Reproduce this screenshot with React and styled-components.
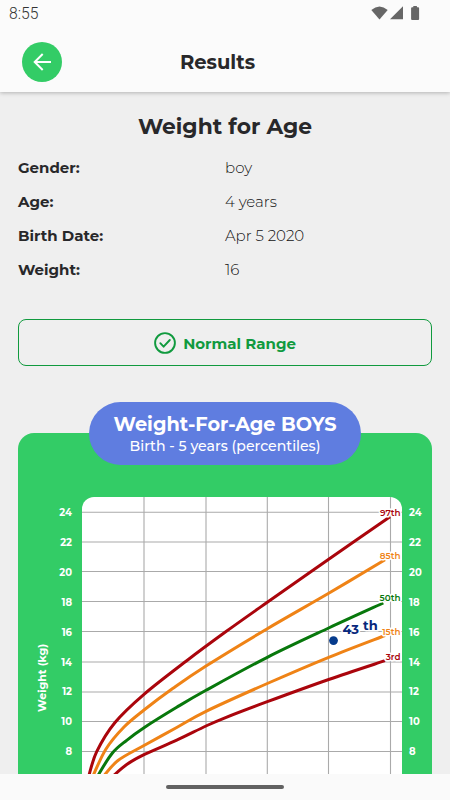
import React from "react";
import styled, { createGlobalStyle } from "styled-components";

const GlobalStyle = createGlobalStyle`
  * {
    box-sizing: border-box;
  }
  body {
    margin: 0;
    overflow: hidden;
    background: #efefef;
    font-family: Montserrat, Inter, "Open Sans", sans-serif;
  }
`;

const Screen = styled.div`
  width: 450px;
  height: 800px;
  display: flex;
  flex-direction: column;
  overflow: hidden;
  color: #28282a;
`;

const Top = styled.div`
  flex: none;
  height: 92px;
  background: #fbfbfb;
  box-shadow: 0 1px 4px rgba(0, 0, 0, 0.25);
  z-index: 1;
`;

const StatusBar = styled.div`
  height: 28px;
  display: flex;
  align-items: center;
  justify-content: space-between;
  padding: 0 30px 0 9px;
`;

const Clock = styled.span`
  font-family: Roboto, sans-serif;
  font-size: 15.7px;
  font-weight: 300;
  line-height: 28px;
  color: #333;
`;

const Header = styled.header`
  height: 64px;
  display: grid;
  grid-template-columns: 40px 1fr 40px;
  align-items: center;
  padding: 4px 37px 0 22px;
`;

const BackButton = styled.button`
  width: 40px;
  height: 40px;
  padding: 0;
  border: none;
  border-radius: 50%;
  background: #33cc66;
  display: flex;
  align-items: center;
  justify-content: center;
`;

const HeaderTitle = styled.h1`
  margin: 0;
  text-align: center;
  font-size: 19.5px;
  font-weight: 700;
  line-height: 24px;
`;

const Content = styled.main`
  flex: 1;
  min-height: 0;
  overflow: hidden;
  background: #efefef;
  padding: 20px 18px 0;
`;

const Title = styled.h2`
  margin: 0 0 10px;
  padding-top: 1px;
  text-align: center;
  font-size: 21.8px;
  font-weight: 700;
  line-height: 27px;
`;

const InfoRow = styled.div`
  display: grid;
  grid-template-columns: 1fr 1fr;
  height: 34.1px;
  align-items: center;
  font-size: 15px;
`;

const Label = styled.span`
  font-weight: 700;
`;

const Value = styled.span`
  font-weight: 300;
  color: #111;
`;

const Status = styled.div`
  height: 47px;
  margin-top: 33px;
  border: 1.5px solid #109a3e;
  border-radius: 8px;
  display: flex;
  align-items: center;
  justify-content: center;
  gap: 7px;
  padding-top: 1px;
  color: #109a3e;
  font-size: 15px;
  font-weight: 700;
`;

const ChartCard = styled.section`
  height: 400px;
  margin-top: 67px;
  border-radius: 16px;
  background: #33cc66;
  display: flex;
  flex-direction: column;
  align-items: center;
`;

const ChartBadge = styled.div`
  flex: none;
  width: 272px;
  height: 63px;
  margin-top: -31px;
  border-radius: 32px;
  background: #5f7de0;
  color: #fff;
  text-align: center;
  padding-top: 9px;
`;

const BadgeTitle = styled.div`
  font-size: 19.3px;
  font-weight: 700;
  line-height: 26px;
`;

const BadgeSub = styled.div`
  font-size: 14.1px;
  font-weight: 500;
  line-height: 19px;
`;

const ChartArea = styled.div`
  width: 100%;
  margin-top: 32px;
  display: flex;
`;

const AxisTitle = styled.div`
  width: 32px;
  height: 276px;
  display: flex;
  align-items: center;
  justify-content: flex-end;
  padding: 0 0 147px;
  writing-mode: vertical-rl;
  transform: rotate(180deg);
  color: #fff;
  font-size: 11px;
  font-weight: 700;
  white-space: nowrap;
`;

const AxisText = styled.span`
  margin-right: 16px;
`;

const Ticks = styled.div`
  width: ${(p) => (p.$right ? "30px" : "32px")};
  padding-left: ${(p) => (p.$right ? "7px" : "0")};
  padding-right: ${(p) => (p.$right ? "0" : "10px")};
  text-align: ${(p) => (p.$right ? "left" : "right")};
  color: #fff;
  font-size: 10px;
  font-weight: 700;
`;

const Tick = styled.div`
  height: 29.85px;
  line-height: 31px;
`;

const Plot = styled.svg`
  display: block;
  width: 320px;
  height: 280px;
  border-radius: 12px 12px 0 0;
  background: #fff;
`;

const CurveLabel = styled.text`
  font-size: 8.8px;
  font-weight: 600;
  text-anchor: end;
  paint-order: stroke;
  stroke: #fff;
  stroke-width: 3px;
  stroke-linejoin: round;
`;

const PointLabel = styled.text`
  font-size: 13px;
  font-weight: 700;
  fill: #07277c;
  paint-order: stroke;
  stroke: #fff;
  stroke-width: 3px;
`;

const NavBar = styled.footer`
  flex: none;
  height: 26px;
  background: #fafafa;
  display: flex;
  justify-content: center;
  padding-top: 11px;
`;

const NavHandle = styled.div`
  width: 118px;
  height: 4px;
  border-radius: 2px;
  background: #626262;
`;

const info = [
  ["Gender:", "boy"],
  ["Age:", "4 years"],
  ["Birth Date:", "Apr 5 2020"],
  ["Weight:", "16"],
];

const weights = [24, 22, 20, 18, 16, 14, 12, 10, 8];
const gridX = [62, 124, 185.3, 246.5, 308.5];
const gridY = [15.3, 45, 74.5, 104.5, 134.5, 165, 195, 224.5, 254.5];

const curves = [
  {
    name: "97th",
    color: "#aa050c",
    y: 19,
    points: [[6.5, 280], [14.7, 254.7], [33, 225.5], [62, 197.3], [104.7, 163.7], [143, 135.3], [185.3, 105.3], [246.7, 62.3], [308, 19.7]],
  },
  {
    name: "85th",
    color: "#ef8316",
    y: 61.5,
    points: [[10.5, 280], [24, 252], [42, 230], [62, 213], [91, 191.3], [124, 169], [185.3, 131.7], [246.7, 96.3], [303, 62.8]],
  },
  {
    name: "50th",
    color: "#08780c",
    y: 104,
    points: [[15, 280], [30, 256.5], [44.7, 243.3], [62, 230.7], [94.7, 210.3], [124, 193.3], [185.3, 160.3], [246.7, 131], [301.3, 106]],
  },
  {
    name: "15th",
    color: "#ef8316",
    y: 137.5,
    points: [[21, 280], [36, 263.5], [62, 248.5], [94.7, 230.5], [124, 214.3], [185.3, 186.5], [246.7, 160.3], [303, 138.5]],
  },
  {
    name: "3rd",
    color: "#aa050c",
    y: 162.5,
    points: [[30, 280], [44.7, 267.5], [62, 257.7], [94.7, 243.2], [124, 229], [143, 220.8], [185.3, 204.7], [246.7, 182.5], [303, 163.7]],
  },
];

// smooth line through all the points
const toPath = (pts) => {
  let d = `M${pts[0][0]} ${pts[0][1]}`;
  for (let i = 0; i < pts.length - 1; i++) {
    const a = pts[i - 1] || pts[i];
    const b = pts[i];
    const c = pts[i + 1];
    const e = pts[i + 2] || c;
    d += ` C${b[0] + (c[0] - a[0]) / 6} ${b[1] + (c[1] - a[1]) / 6} ${c[0] - (e[0] - b[0]) / 6} ${c[1] - (e[1] - b[1]) / 6} ${c[0]} ${c[1]}`;
  }
  return d;
};

const StatusIcons = () => (
  <svg width="50" height="16" viewBox="0 0 50 16" fill="#666">
    <path d="M1.3 4Q9.5-3 17.7 4L9.5 13.4Z" />
    <path d="M33 0.3V13.3H20Z" />
    <path d="M43.3 0h3.6v1.2h1.2q1 0 1 1v10.8q0 1-1 1h-6q-1 0-1-1V2.2q0-1 1-1h1.2Z" />
  </svg>
);

const ArrowIcon = () => (
  <svg width="20" height="20" viewBox="0 0 20 20" fill="none" stroke="#fff" strokeWidth="2">
    <path d="M19 10H3M10.7 2L2.7 10l8 8" />
  </svg>
);

const CheckIcon = () => (
  <svg width="22" height="22" viewBox="0 0 22 22" fill="none" stroke="currentColor" strokeWidth="1.9">
    <circle cx="11" cy="11" r="9.9" />
    <path d="M6.3 11.2l3.3 3.5 6.2-6.7" strokeLinecap="round" strokeLinejoin="round" />
  </svg>
);

const Chart = () => (
  <Plot viewBox="0 0 320 280">
    {gridX.map((x) => (
      <line key={x} x1={x} x2={x} y1="0" y2="280" stroke="#aaa" strokeWidth="1.1" />
    ))}
    {gridY.map((y) => (
      <line key={y} x1="0" x2="320" y1={y} y2={y} stroke="#aaa" strokeWidth="1.1" />
    ))}
    {curves.map((c) => (
      <path key={c.name} d={toPath(c.points)} fill="none" stroke={c.color} strokeWidth="3" />
    ))}
    {curves.map((c) => (
      <CurveLabel key={c.name} x="318.5" y={c.y} fill={c.color}>
        {c.name}
      </CurveLabel>
    ))}
    <circle cx="251.5" cy="143.6" r="4.4" fill="#063b8c" />
    <PointLabel x="260.5" y="136.5">43</PointLabel>
    <PointLabel x="281" y="132.5">th</PointLabel>
  </Plot>
);

export default function App() {
  return (
    <>
      <GlobalStyle />
      <Screen>
        <Top>
          <StatusBar>
            <Clock>8:55</Clock>
            <StatusIcons />
          </StatusBar>
          <Header>
            <BackButton aria-label="Back">
              <ArrowIcon />
            </BackButton>
            <HeaderTitle>Results</HeaderTitle>
          </Header>
        </Top>
        <Content>
          <Title>Weight for Age</Title>
          {info.map(([label, value]) => (
            <InfoRow key={label}>
              <Label>{label}</Label>
              <Value>{value}</Value>
            </InfoRow>
          ))}
          <Status>
            <CheckIcon />
            <span>Normal Range</span>
          </Status>
          <ChartCard>
            <ChartBadge>
              <BadgeTitle>Weight-For-Age BOYS</BadgeTitle>
              <BadgeSub>Birth - 5 years (percentiles)</BadgeSub>
            </ChartBadge>
            <ChartArea>
              <AxisTitle>
                <AxisText>Weight (kg)</AxisText>
              </AxisTitle>
              <Ticks>
                {weights.map((w) => (
                  <Tick key={w}>{w}</Tick>
                ))}
              </Ticks>
              <Chart />
              <Ticks $right>
                {weights.map((w) => (
                  <Tick key={w}>{w}</Tick>
                ))}
              </Ticks>
            </ChartArea>
          </ChartCard>
        </Content>
        <NavBar>
          <NavHandle />
        </NavBar>
      </Screen>
    </>
  );
}
